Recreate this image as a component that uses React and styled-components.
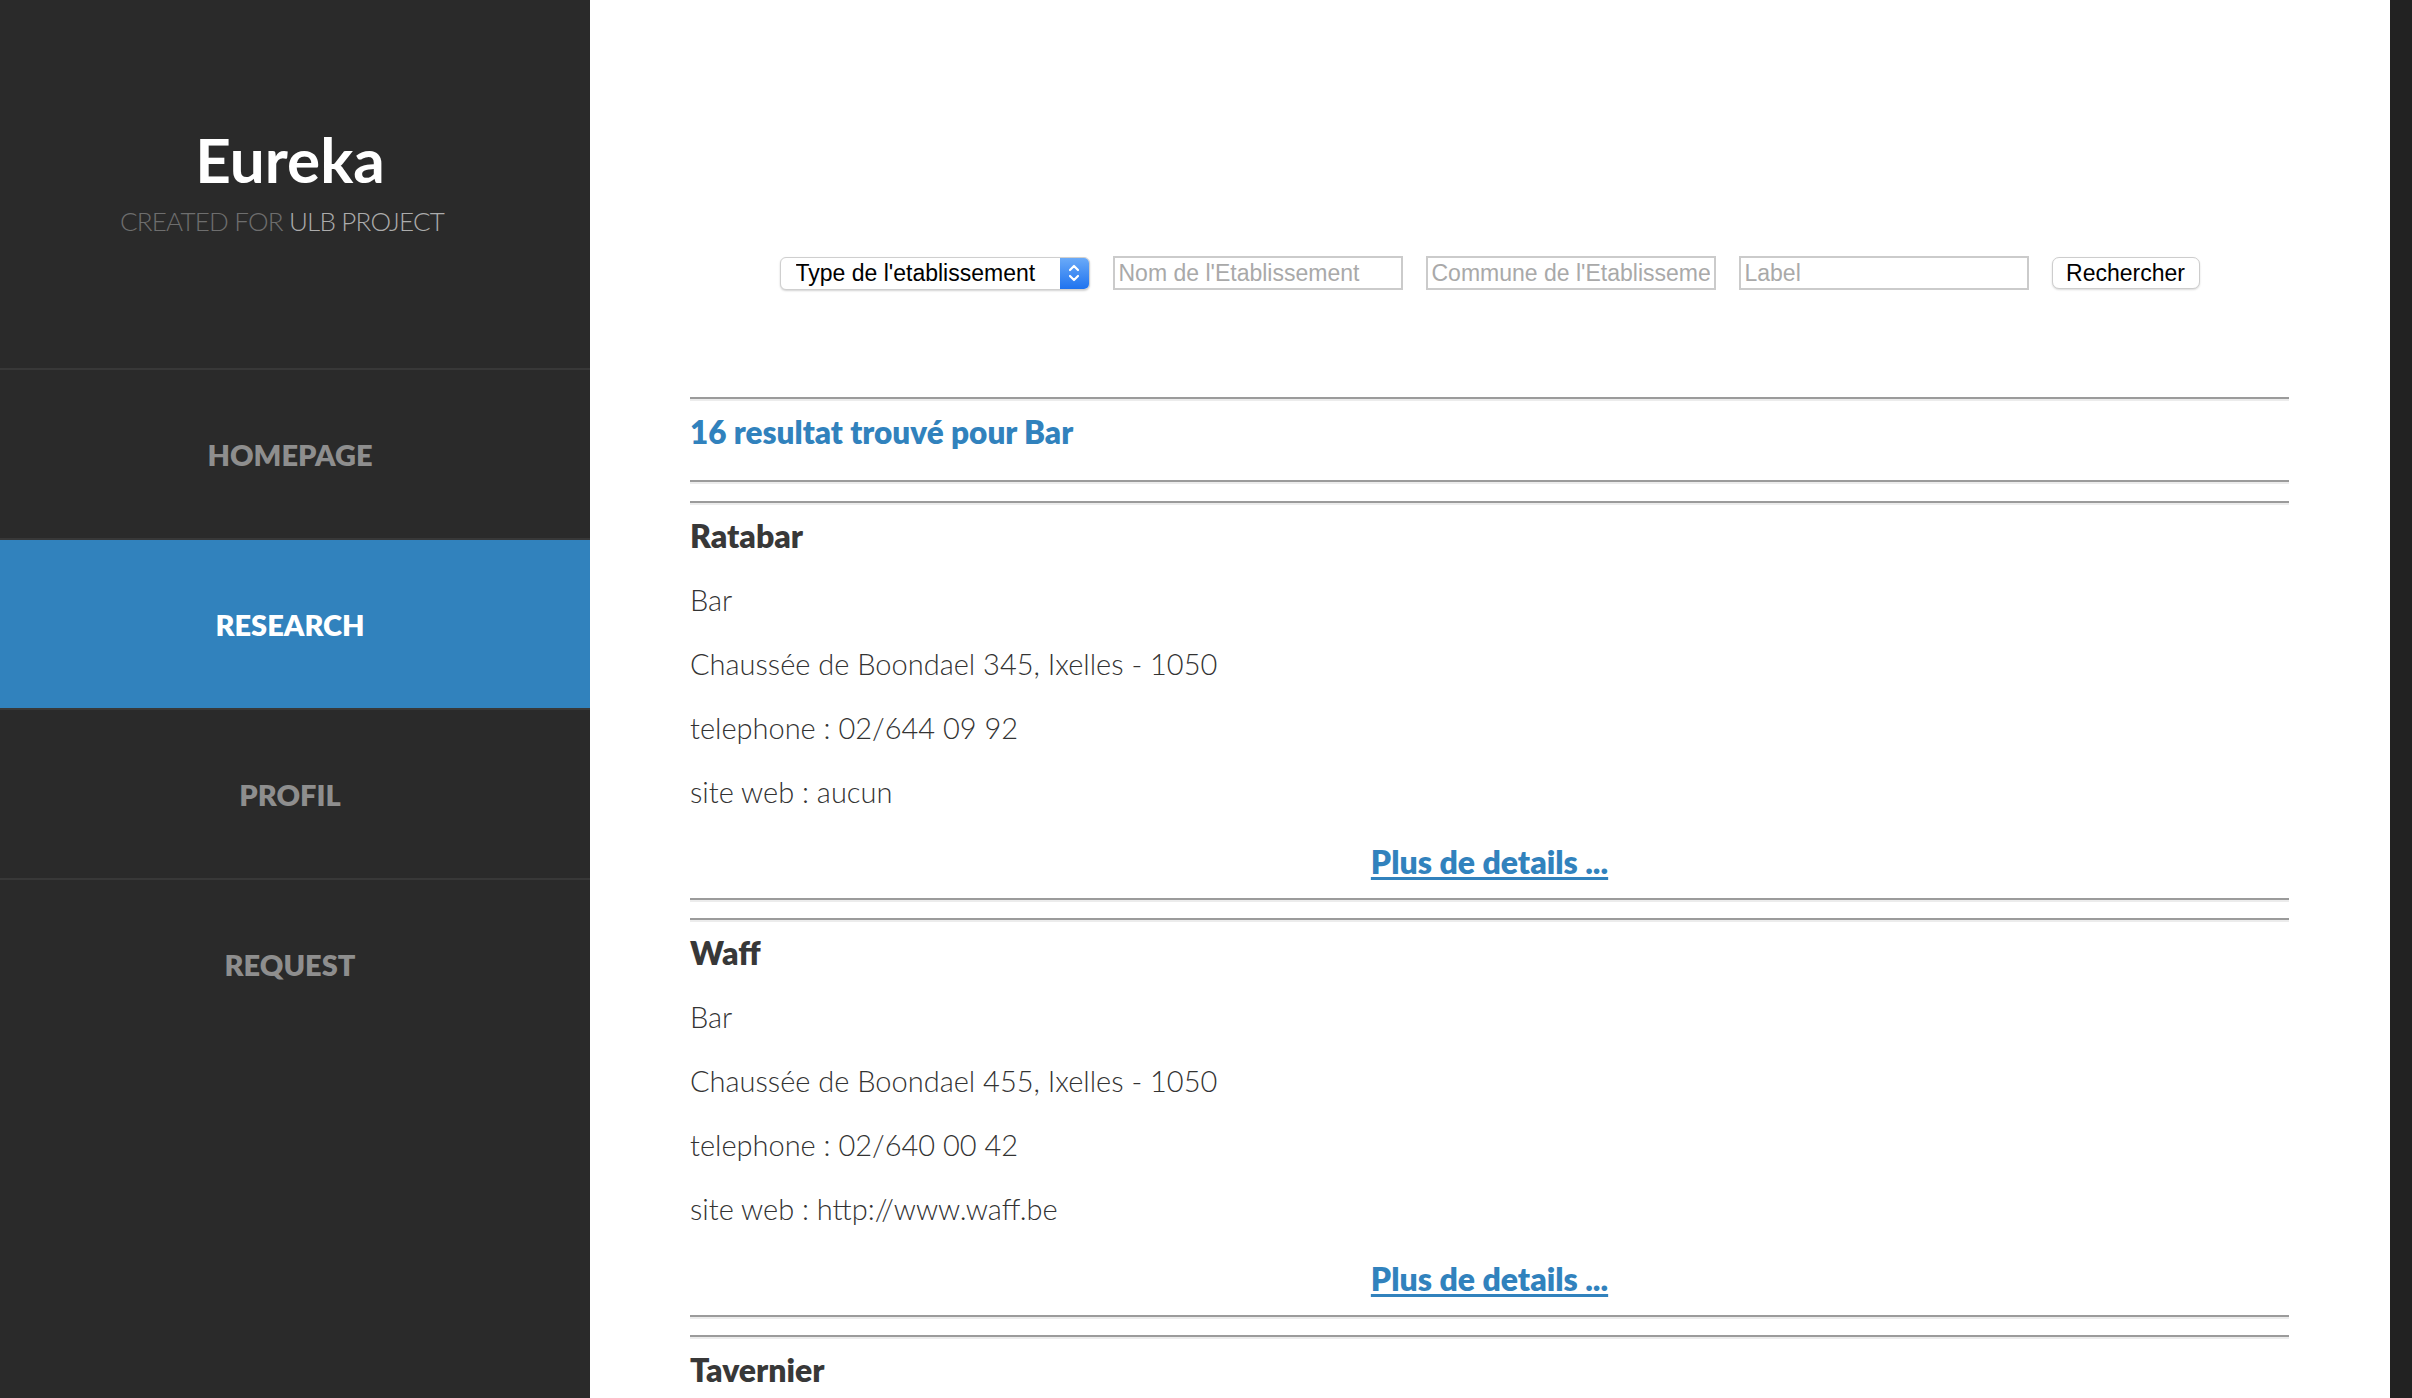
import React from "react";
import styled, { createGlobalStyle } from "styled-components";

const GlobalStyle = createGlobalStyle`
  html, body { margin: 0; padding: 0; }
  body { font-family: Lato, "Open Sans", sans-serif; background: #fff; }
  * { box-sizing: border-box; }
`;

const Page = styled.div`
  display: flex;
  height: 100vh;
  overflow: hidden;
`;

const Sidebar = styled.aside`
  width: 590px;
  flex: none;
  background: #2a2a2a;
  display: flex;
  flex-direction: column;
`;

const Brand = styled.header`
  height: 368px;
  padding: 128px 10px 0 0;
  display: flex;
  flex-direction: column;
  align-items: center;
`;

const Title = styled.h1`
  margin: 0;
  font-family: Lato, sans-serif;
  font-weight: 700;
  font-size: 62px;
  line-height: 62px;
  color: #ffffff;
`;

const Subtitle = styled.p`
  margin: 18px 0 0;
  padding-right: 16px;
  font-family: Lato, sans-serif;
  font-weight: 300;
  font-size: 26px;
  line-height: 26px;
  letter-spacing: -0.8px;
  color: #6e6e6e;
`;

const SubtitleStrong = styled.span`
  color: #acacac;
`;

const NavItem = styled.a`
  height: 170px;
  border-top: 2px solid #383838;
  display: flex;
  align-items: center;
  justify-content: center;
  padding-right: 10px;
  background: ${(p) => (p.$active ? "#3182bd" : "transparent")};
  color: ${(p) => (p.$active ? "#ffffff" : "#8e8e8e")};
  font-family: Lato, sans-serif;
  font-weight: 800;
  font-size: 29px;
  text-decoration: none;
  text-transform: uppercase;
`;

const Main = styled.main`
  flex: 1;
  padding: 256px 101px 0 100px;
  overflow: hidden;
`;

const SearchForm = styled.form`
  display: flex;
  justify-content: center;
  align-items: center;
  gap: 23px;
  margin: 0 0 107px;
`;

const SelectBox = styled.div`
  width: 310px;
  height: 33px;
  display: flex;
  border: 1px solid #cfcfcf;
  border-radius: 6px;
  background: #fff;
  box-shadow: 0 1px 2px rgba(0, 0, 0, 0.18);
  overflow: hidden;
`;

const NativeSelect = styled.select`
  appearance: none;
  -webkit-appearance: none;
  flex: 1;
  min-width: 0;
  border: none;
  background: transparent;
  padding: 0 0 0 15px;
  font-family: "Liberation Sans", Arial, sans-serif;
  font-size: 23px;
  color: #000;
  outline: none;
`;

const ArrowBox = styled.span`
  width: 29px;
  flex: none;
  display: flex;
  align-items: center;
  justify-content: center;
  background: linear-gradient(#6aaaf8, #1f73ef);
`;

const TextInput = styled.input`
  width: 290px;
  height: 34px;
  border: 2px solid #cbcbcb;
  padding: 0 4px;
  font-family: "Liberation Sans", Arial, sans-serif;
  font-size: 23px;
  color: #222;
  outline: none;
  &::placeholder { color: #a9a9a9; }
`;

const SubmitButton = styled.button`
  width: 148px;
  height: 32px;
  border: 1px solid #cdcdcd;
  border-radius: 7px;
  background: #fff;
  box-shadow: 0 1px 2px rgba(0, 0, 0, 0.15);
  font-family: "Liberation Sans", Arial, sans-serif;
  font-size: 23px;
  color: #000;
  padding: 0;
`;

const Rule = styled.hr`
  margin: 0;
  height: 0;
  border: none;
  border-top: 2px solid #9b9b9b;
  border-bottom: 2px solid #ececec;
`;

const ResultsHeading = styled.h3`
  margin: 11px 0 28px;
  font-family: Lato, sans-serif;
  font-weight: 800;
  font-size: 31.5px;
  line-height: 40px;
  color: #3182bd;
`;

const Entry = styled.section`
  margin-top: ${(p) => p.$gap}px;
`;

const EntryName = styled.h4`
  margin: 11px 0 12px;
  font-family: Lato, sans-serif;
  font-weight: 800;
  font-size: 32px;
  line-height: 40px;
  color: #383838;
`;

const InfoLine = styled.p`
  margin: 0;
  font-family: Lato, sans-serif;
  font-weight: 300;
  font-size: 29px;
  line-height: 64px;
  color: #333;
`;

const DetailsRow = styled.div`
  margin: 6px 0 4px;
  height: 64px;
  display: flex;
  align-items: center;
  justify-content: center;
`;

const DetailsLink = styled.a`
  font-family: Lato, sans-serif;
  font-weight: 800;
  font-size: 32px;
  line-height: 40px;
  color: #3182bd;
  text-decoration: underline;
  text-decoration-thickness: 3px;
  text-underline-offset: 3px;
`;

const Chevrons = () => (
  <svg width="14" height="22" viewBox="0 0 14 22" fill="none" stroke="#fff" strokeWidth="2.2" strokeLinecap="round" strokeLinejoin="round">
    <path d="M3 8 L7 4 L11 8" />
    <path d="M3 14 L7 18 L11 14" />
  </svg>
);

const results = [
  {
    name: "Ratabar",
    lines: ["Bar", "Chaussée de Boondael 345, Ixelles - 1050", "telephone : 02/644 09 92", "site web : aucun"],
  },
  {
    name: "Waff",
    lines: ["Bar", "Chaussée de Boondael 455, Ixelles - 1050", "telephone : 02/640 00 42", "site web : http://www.waff.be"],
  },
  { name: "Tavernier", lines: [] },
];

const navItems = ["Homepage", "Research", "Profil", "Request"];

export default function App() {
  return (
    <>
      <GlobalStyle />
      <Page>
        <Sidebar>
          <Brand>
            <Title>Eureka</Title>
            <Subtitle>
              CREATED FOR <SubtitleStrong>ULB PROJECT</SubtitleStrong>
            </Subtitle>
          </Brand>
          {navItems.map((item) => (
            <NavItem key={item} href="#" $active={item === "Research"}>
              {item}
            </NavItem>
          ))}
        </Sidebar>
        <Main>
          <SearchForm onSubmit={(e) => e.preventDefault()}>
            <SelectBox>
              <NativeSelect defaultValue="">
                <option value="">Type de l'etablissement</option>
                <option value="bar">Bar</option>
                <option value="restaurant">Restaurant</option>
              </NativeSelect>
              <ArrowBox>
                <Chevrons />
              </ArrowBox>
            </SelectBox>
            <TextInput placeholder="Nom de l'Etablissement" />
            <TextInput placeholder="Commune de l'Etablissement" />
            <TextInput placeholder="Label" />
            <SubmitButton type="submit">Rechercher</SubmitButton>
          </SearchForm>
          <Rule />
          <ResultsHeading>16 resultat trouvé pour Bar</ResultsHeading>
          <Rule />
          {results.map((r, i) => (
            <Entry key={r.name} $gap={i === 0 ? 17 : 16}>
              <Rule />
              <EntryName>{r.name}</EntryName>
              {r.lines.map((l) => (
                <InfoLine key={l}>{l}</InfoLine>
              ))}
              {r.lines.length > 0 && (
                <>
                  <DetailsRow>
                    <DetailsLink href="#">Plus de details ...</DetailsLink>
                  </DetailsRow>
                  <Rule />
                </>
              )}
            </Entry>
          ))}
        </Main>
        <RightEdge />
      </Page>
    </>
  );
}

const RightEdge = styled.div`
  width: 22px;
  flex: none;
  background: #222;
`;
